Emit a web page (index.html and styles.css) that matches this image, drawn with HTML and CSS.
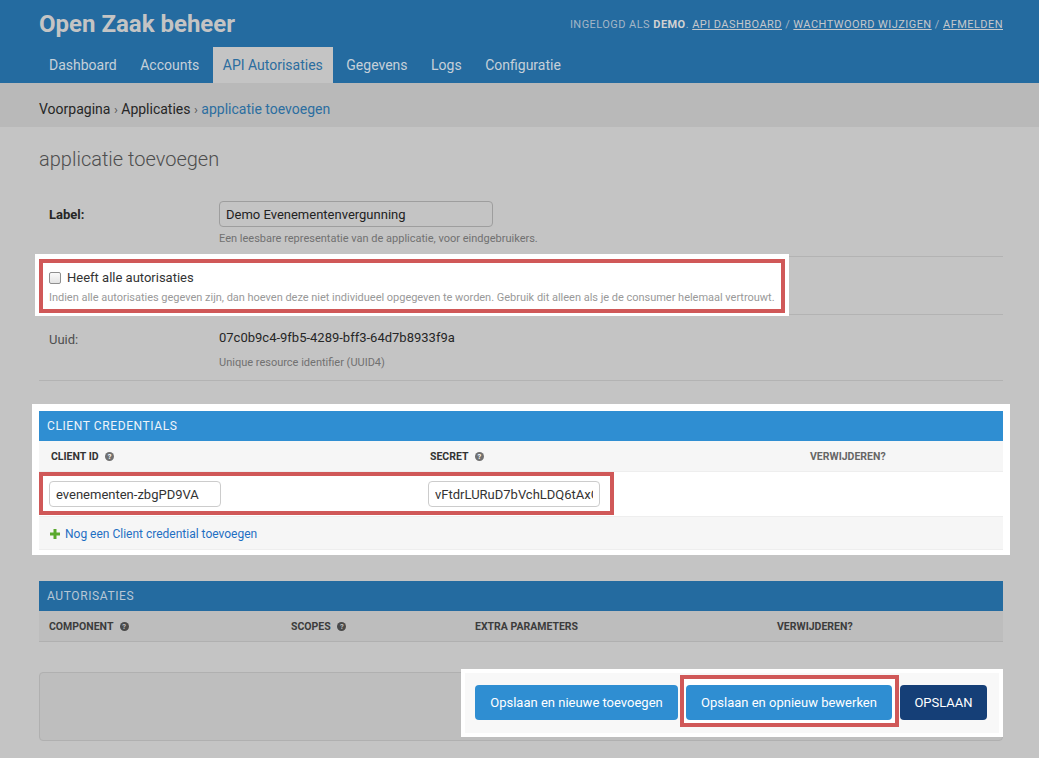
FILE: index.html
```html
<!DOCTYPE html>
<html lang="nl">
<head>
<meta charset="utf-8">
<title>applicatie toevoegen | Open Zaak beheer</title>
<link rel="stylesheet" href="styles.css">
</head>
<body>
<div class="header">
  <div class="branding">
    <h1 class="site-name">Open Zaak beheer</h1>
    <div class="usertools">Ingelogd als <strong>demo</strong>. <a href="#">API dashboard</a> / <a href="#">Wachtwoord wijzigen</a> / <a href="#">Afmelden</a></div>
  </div>
  <nav class="nav">
    <a href="#">Dashboard</a>
    <a href="#">Accounts</a>
    <a href="#" class="active">API Autorisaties</a>
    <a href="#">Gegevens</a>
    <a href="#">Logs</a>
    <a href="#">Configuratie</a>
  </nav>
</div>
<div class="breadcrumbs">Voorpagina <span class="sep">›</span> Applicaties <span class="sep">›</span> <a href="#">applicatie toevoegen</a></div>

<div class="content">
  <h2 class="page-title">applicatie toevoegen</h2>

  <div class="fieldset">
    <div class="row">
      <div class="label strong">Label:</div>
      <div class="field">
        <input class="input dim-input" type="text" value="Demo Evenementenvergunning">
        <div class="help dim-help">Een leesbare representatie van de applicatie, voor eindgebruikers.</div>
      </div>
    </div>
    <div class="row row-spot">
      <div class="spot spot-check">
        <div class="mark mark-check">
          <div class="check-line"><span class="checkbox"></span><span class="check-label">Heeft alle autorisaties</span></div>
          <div class="help nowrap">Indien alle autorisaties gegeven zijn, dan hoeven deze niet individueel opgegeven te worden. Gebruik dit alleen als je de consumer helemaal vertrouwt.</div>
        </div>
      </div>
    </div>
    <div class="row">
      <div class="label uuid-label">Uuid:</div>
      <div class="field">
        <div class="readonly">07c0b9c4-9fb5-4289-bff3-64d7b8933f9a</div>
        <div class="help dim-help">Unique resource identifier (UUID4)</div>
      </div>
    </div>
  </div>

  <div class="spot spot-module">
    <div class="module">
      <div class="caption">Client credentials</div>
      <div class="thead cred-cols">
        <div class="th">Client ID <span class="qicon">?</span></div>
        <div class="th">Secret <span class="qicon">?</span></div>
        <div class="th th-muted">Verwijderen?</div>
      </div>
      <div class="cred-row">
        <div class="mark mark-cred">
          <div class="td td-id"><input class="input" type="text" value="evenementen-zbgPD9VA"></div>
          <div class="td td-secret"><input class="input" type="text" value="vFtdrLURuD7bVchLDQ6tAxGmK3PqW"></div>
        </div>
        <div class="td"></div>
      </div>
      <div class="add-row">
        <svg class="plus" width="10" height="10" viewBox="0 0 10 10" aria-hidden="true"><rect x="3.5" y="0" width="3" height="10" fill="#5aa92e"/><rect x="0" y="3.5" width="10" height="3" fill="#5aa92e"/></svg>
        <a href="#">Nog een Client credential toevoegen</a>
      </div>
    </div>
  </div>

  <div class="module dim-module">
    <div class="caption dim-caption">Autorisaties</div>
    <div class="thead auth-cols dim-thead">
      <div class="th">Component <span class="qicon dim-q">?</span></div>
      <div class="th">Scopes <span class="qicon dim-q">?</span></div>
      <div class="th">Extra parameters</div>
      <div class="th">Verwijderen?</div>
    </div>
  </div>

  <div class="submit-row">
    <div class="spot spot-submit">
      <button class="btn btn-b1" type="button">Opslaan en nieuwe toevoegen</button>
      <div class="mark mark-submit"><button class="btn btn-b2" type="button">Opslaan en opnieuw bewerken</button></div>
      <button class="btn btn-default" type="button">OPSLAAN</button>
    </div>
  </div>
</div>
</body>
</html>
```

FILE: styles.css
```css
* { box-sizing: border-box; }
html, body { margin: 0; padding: 0; }
body {
  background: #c4c4c4;
  font-family: Roboto, "Liberation Sans", Arial, sans-serif;
  font-size: 13px;
  color: #262626;
  width: 1039px;
  height: 758px;
  overflow: hidden;
}
a { text-decoration: none; }

/* header */
.header { background: #246ba0; padding: 0 36px 0 39px; }
.branding { display: flex; justify-content: space-between; align-items: center; height: 47px; }
.site-name { margin: 0; font-size: 24px; font-weight: 700; color: #c4c4c4; line-height: 30px; }
.usertools { font-size: 11px; letter-spacing: 0.45px; text-transform: uppercase; color: #a3b6c7; padding-top: 1px; }
.usertools strong { color: #d2d2d2; font-weight: 700; }
.usertools a { color: #c4c8cc; text-decoration: underline; }
.nav { display: flex; gap: 3.5px; height: 36px; }
.nav a { display: block; padding: 0 10px; line-height: 36px; font-size: 14px; color: #c6d0d9; }
.nav a.active { background: #c4c4c4; color: #2b6d9f; }

.breadcrumbs { background: #b9b9b9; height: 44px; line-height: 26px; padding: 13px 0 0 39px; font-size: 14px; color: #262626; }
.breadcrumbs .sep { color: #5a5a5a; font-size: 13px; }
.breadcrumbs a { color: #2c6ea0; }

/* content */
.content { padding: 0 36px 0 39px; }
.page-title { margin: 20px 0 20px; font-family: "Roboto Light", Roboto, "Liberation Sans", sans-serif; font-size: 20px; line-height: 24px; font-weight: 300; color: #4e4e4e; }

.row { display: flex; padding: 10px; border-bottom: 1px solid #b3b3b3; }
.label { width: 170px; line-height: 26px; color: #4e4e4e; }
.label.strong { font-weight: 700; color: #262626; line-height: 28px; height: 26px; }
.uuid-label { padding-top: 2px; }
.field { display: flex; flex-direction: column; }
.input {
  height: 26px; width: 172px; padding: 0 6px;
  border: 1px solid #ccc; border-radius: 4px; background: #fff;
  font-family: Roboto, "Liberation Sans", Arial, sans-serif; font-size: 13px; color: #333;
}
.dim-input { width: 274px; background: #c4c4c4; border-color: #9e9e9e; color: #222; }
.readonly { line-height: 26px; color: #262626; }
.help { font-size: 11px; line-height: 14px; color: #999; margin-top: 5px; }
.dim-help { color: #717171; }
.nowrap { white-space: nowrap; letter-spacing: -0.02px; }

/* spotlight highlight */
.spot { background: #fff; border: 0 solid #fff; }
.mark { border: 4px solid #d05858; background: #fff; }

.row-spot { display: flow-root; padding: 0; }
.spot-check { width: 754px; margin: -3px 0 -2px -4px; border-width: 5px 4px 3px 4px; }
.mark-check { padding: 7px 6px 4px; height: 54px; overflow: hidden; }
.check-line { display: flex; align-items: center; line-height: 16px; }
.checkbox {
  width: 12px; height: 12px; border: 1px solid #8f8f8f; border-radius: 2px;
  background: linear-gradient(#fafafa, #e4e4e4); margin-right: 6px;
}
.check-label { font-size: 13px; color: #333; }
.mark-check .help { margin-top: 5px; }

.spot-module { margin: 23px -7px 0; padding: 7px 7px 5px; }
.module { background: #fff; }
.caption {
  height: 30px; line-height: 30px; padding-left: 8px;
  background: #2f8ed2; color: #eef4fa; font-size: 12px; letter-spacing: 0.6px; text-transform: uppercase;
}
.thead { display: grid; height: 30px; align-items: center; background: #f6f6f6; }
.cred-cols { grid-template-columns: 379px 380px 1fr; }
.th { padding-left: 12px; font-size: 10.5px; font-weight: 700; text-transform: uppercase; color: #333; }
.th-muted { color: #666; }
.qicon {
  display: inline-block; width: 9px; height: 9px; border-radius: 50%;
  background: #707070; color: #fff; font-size: 7.5px; line-height: 9px; text-align: center;
  font-weight: 700; margin-left: 4px; vertical-align: 1px;
}
.cred-row { display: flex; height: 46px; border-bottom: 1px solid #eee; border-top: 1px solid #eee; }
.mark-cred { display: flex; width: 575px; height: 43px; margin-top: 0; padding-top: 5px; }
.td-id { width: 375px; padding-left: 6px; }
.td-secret { padding-left: 10px; }
.add-row { display: flex; align-items: center; gap: 5px; height: 33px; padding: 1px 0 0 11px; background: #f6f6f6; border-bottom: 1px solid #eee; }
.add-row a { color: #1f6fc3; font-size: 12px; }

.dim-module { margin-top: 26px; background: transparent; }
.dim-caption { background: #246ba0; color: #b8c7d5; }
.dim-thead { background: #bdbdbd; border-bottom: 1px solid #b0b0b0; height: 31px; }
.auth-cols { grid-template-columns: 242px 184px 302px 1fr; }
.dim-thead .th { padding-left: 10px; color: #3c3c3c; }
.dim-q { background: #4a4a4a; color: #c4c4c4; }

/* submit row */
.submit-row {
  display: flex; justify-content: flex-end; align-items: flex-start;
  margin-top: 30px; height: 69px;
  background: #bebebe; border: 1px solid #b0b0b0; border-radius: 4px;
}
.spot-submit {
  display: flex; align-items: flex-start;
  margin: -4px -1px 0 0; width: 542px; height: 68px;
  border-width: 4px; background: #f8f8f8; padding: 0 12px 0 10px;
}
.btn {
  height: 35px; border: 0; border-radius: 4px; background: #2f8ed2; color: #fff;
  font-family: Roboto, "Liberation Sans", Arial, sans-serif; font-size: 13px; padding: 0;
  cursor: pointer;
}
.btn-b1 { width: 203px; margin-top: 12px; }
.mark-submit { width: 219px; height: 52px; margin: 2px 0 0 2px; padding: 6px 0 0 2px; }
.btn-b2 { width: 206px; }
.btn-default { width: 87px; margin: 12px 0 0 1px; background: #153f77; }
```
